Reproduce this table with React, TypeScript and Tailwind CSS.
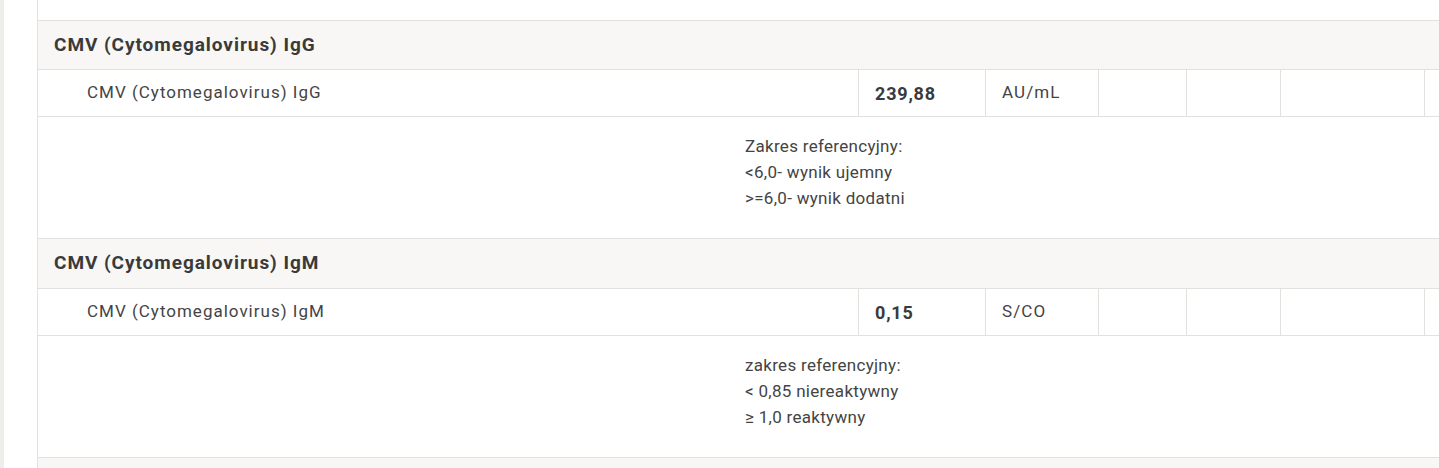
import React from "react";

const tests = [
  {
    group: "CMV (Cytomegalovirus) IgG",
    name: "CMV (Cytomegalovirus) IgG",
    value: "239,88",
    unit: "AU/mL",
    ref: ["Zakres referencyjny:", "<6,0- wynik ujemny", ">=6,0- wynik dodatni"],
  },
  {
    group: "CMV (Cytomegalovirus) IgM",
    name: "CMV (Cytomegalovirus) IgM",
    value: "0,15",
    unit: "S/CO",
    ref: ["zakres referencyjny:", "< 0,85 niereaktywny", "≥ 1,0 reaktywny"],
  },
];

const cell = "border border-[#e2e1dd] px-4";

const App = () => {
  return (
    <div
      className="flex h-[468px] w-[1439px] overflow-hidden bg-white text-[17px] text-[#444]"
      style={{ fontFamily: "Roboto, 'Liberation Sans', sans-serif" }}
    >
      <div className="w-[4px] shrink-0 bg-[#eeede9]" />
      <div className="w-[33px] shrink-0 bg-white" />
      <div className="-mt-px shrink-0">
        <table className="w-[1600px] table-fixed border-collapse border-l border-[#e2e1dd]">
          <colgroup>
            <col className="w-[821px]" />
            <col className="w-[127px]" />
            <col className="w-[113px]" />
            <col className="w-[88px]" />
            <col className="w-[94px]" />
            <col className="w-[144px]" />
            <col />
          </colgroup>
          <tbody>
            <tr className="h-[21px]">
              <td colSpan={7} className={cell} />
            </tr>
            {tests.map((t, i) => (
              <React.Fragment key={t.group}>
                <tr className={`${i === 0 ? "h-[49px]" : "h-[50px]"} bg-[#f8f7f5]`}>
                  <td
                    colSpan={7}
                    className={`${cell} text-[19px] font-bold tracking-[0.95px] text-[#3a3a3a]`}
                  >
                    {t.group}
                  </td>
                </tr>
                <tr className="h-[47px]">
                  <td className={`${cell} pl-[49px] tracking-[1px]`}>{t.name}</td>
                  <td className={`${cell} text-[18px] font-bold tracking-[0.8px] text-[#3a3a3a]`}>
                    {t.value}
                  </td>
                  <td className={`${cell} tracking-[1.1px]`}>{t.unit}</td>
                  <td className={cell} />
                  <td className={cell} />
                  <td className={cell} />
                  <td className={cell} />
                </tr>
                <tr className="h-[122px]">
                  <td
                    colSpan={7}
                    className={`${cell} pl-[707px] pt-[16px] align-top leading-[26px] tracking-[0.3px]`}
                  >
                    {t.ref.map((line) => (
                      <div key={line}>{line}</div>
                    ))}
                  </td>
                </tr>
              </React.Fragment>
            ))}
            <tr className="h-[49px] bg-[#f8f7f5]">
              <td colSpan={7} className={cell} />
            </tr>
          </tbody>
        </table>
      </div>
    </div>
  );
};

export default App;
